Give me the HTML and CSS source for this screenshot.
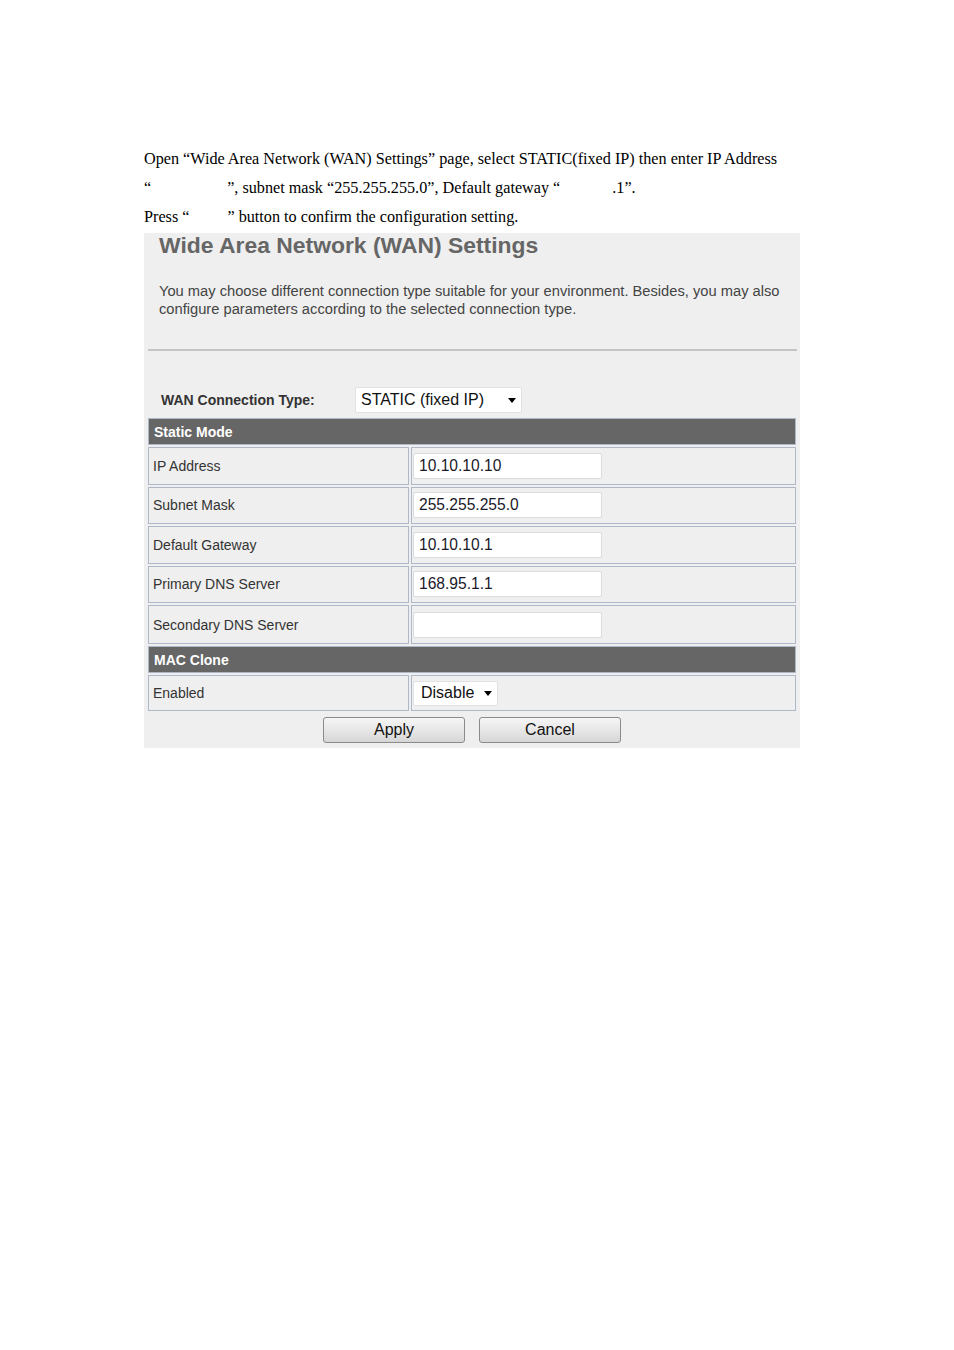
FILE: index.html
```html
<!DOCTYPE html>
<html>
<head>
<meta charset="utf-8">
<link rel="stylesheet" href="styles.css">
</head>
<body>
<div class="page">
  <div class="intro">
    <p>Open “Wide Area Network (WAN) Settings” page, select STATIC(fixed IP) then enter IP Address</p>
    <p>“<span class="gap g1"></span>”, subnet mask “255.255.255.0”, Default gateway “<span class="gap g2"></span>.1”.</p>
    <p>Press “<span class="gap g3"></span>” button to confirm the configuration setting.</p>
  </div>
  <div class="panel">
    <h1 class="title">Wide Area Network (WAN) Settings</h1>
    <p class="desc">You may choose different connection type suitable for your environment. Besides, you may also<br>configure parameters according to the selected connection type.</p>
    <div class="rule"></div>
    <div class="type-row">
      <span class="type-label">WAN Connection Type:</span>
      <div class="select sel-type"><span>STATIC (fixed IP)</span><i class="arrow"></i></div>
    </div>
    <table class="grid">
      <colgroup><col class="c1"><col class="c2"></colgroup>
      <tr class="hrow"><td colspan="2" class="head">Static Mode</td></tr>
      <tr><td class="lbl">IP Address</td><td class="val"><div class="input">10.10.10.10</div></td></tr>
      <tr><td class="lbl">Subnet Mask</td><td class="val"><div class="input">255.255.255.0</div></td></tr>
      <tr><td class="lbl">Default Gateway</td><td class="val"><div class="input">10.10.10.1</div></td></tr>
      <tr><td class="lbl">Primary DNS Server</td><td class="val"><div class="input">168.95.1.1</div></td></tr>
      <tr class="last"><td class="lbl">Secondary DNS Server</td><td class="val"><div class="input"></div></td></tr>
      <tr class="hrow"><td colspan="2" class="head">MAC Clone</td></tr>
      <tr class="short"><td class="lbl">Enabled</td><td class="val"><div class="select sel-dis"><span>Disable</span><i class="arrow"></i></div></td></tr>
    </table>
    <div class="buttons">
      <div class="btn">Apply</div>
      <div class="btn">Cancel</div>
    </div>
  </div>
</div>
</body>
</html>
```
FILE: styles.css
```css
html, body {
  margin: 0;
  padding: 0;
  background: #ffffff;
}
.page {
  width: 954px;
  height: 1350px;
}
.intro {
  padding: 145px 0 0 144px;
  font-family: "Liberation Serif", "Times New Roman", serif;
  font-size: 16.2px;
  line-height: 29px;
  color: #000;
}
.intro p {
  margin: 0;
  white-space: nowrap;
}
.gap { display: inline-block; }
.g1 { width: 76px; }
.g2 { width: 52px; }
.g3 { width: 38px; }

.panel {
  margin: 1px 0 0 144px;
  width: 656px;
  height: 515px;
  background: #efefef;
  font-family: "Liberation Sans", Arial, sans-serif;
  box-sizing: border-box;
}
.title {
  margin: 0;
  padding-left: 15px;
  font-size: 22.9px;
  line-height: 24px;
  font-weight: bold;
  color: #666666;
}
.desc {
  margin: 25px 0 0 0;
  padding-left: 15px;
  font-size: 14.7px;
  line-height: 18px;
  color: #444444;
  white-space: nowrap;
}
.rule {
  margin: 31px 0 0 4px;
  width: 649px;
  height: 2px;
  background: #c4c4c4;
}
.type-row {
  display: flex;
  align-items: center;
  margin-top: 36px;
  height: 26px;
}
.type-label {
  margin-left: 17px;
  width: 194px;
  font-size: 14px;
  font-weight: bold;
  color: #333333;
}
.select {
  display: flex;
  align-items: center;
  background: #ffffff;
  border: 1px solid #e2e2e2;
  border-radius: 2px;
  box-sizing: border-box;
  font-size: 16px;
  color: #111111;
  position: relative;
}
.sel-type {
  width: 167px;
  height: 26px;
  padding-left: 5px;
}
.sel-dis {
  width: 85px;
  height: 25px;
  padding-left: 7px;
  margin-left: 1px;
}
.arrow {
  position: absolute;
  right: 5px;
  top: 50%;
  margin-top: -2px;
  width: 0;
  height: 0;
  border-left: 4.5px solid transparent;
  border-right: 4.5px solid transparent;
  border-top: 5px solid #000000;
}
.grid {
  margin: 3px 0 0 2px;
  width: 652px;
  border-collapse: separate;
  border-spacing: 2px;
  table-layout: fixed;
}
.c1 { width: 261px; }
.grid td {
  border: 1px solid #adb9c8;
  padding: 0 0 0 4px;
  font-size: 14px;
  color: #333333;
  box-sizing: border-box;
}
.grid td.head {
  background: #666666;
  color: #ffffff;
  font-weight: bold;
  height: 27px;
  padding-left: 5px;
}
.grid td.lbl,
.grid td.val {
  height: 37.5px;
}
.grid tr.last td {
  height: 39px;
}
.grid td.val {
  padding-left: 0;
}
.grid tr.short td {
  height: 36px;
}
.input {
  width: 189px;
  height: 26px;
  margin-left: 1px;
  background: #ffffff;
  border: 1px solid #dcdcdc;
  border-radius: 2px;
  box-sizing: border-box;
  font-size: 15.6px;
  line-height: 24px;
  padding-left: 5px;
  color: #1a1a2a;
}
.buttons {
  display: flex;
  justify-content: center;
  gap: 14px;
  margin-top: 4px;
}
.btn {
  width: 142px;
  height: 26px;
  box-sizing: border-box;
  border: 1px solid #8a8a8a;
  border-radius: 3px;
  background: linear-gradient(#f6f6f6, #e4e4e4 60%, #d6d6d6);
  font-size: 16px;
  line-height: 24px;
  text-align: center;
  color: #111111;
}
```
